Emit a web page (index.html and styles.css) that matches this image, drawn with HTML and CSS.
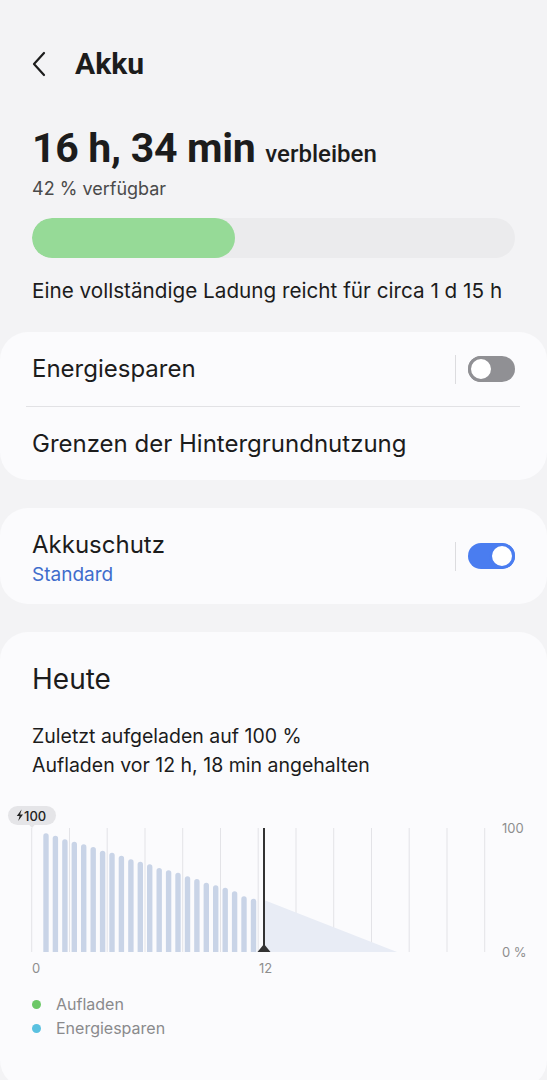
FILE: index.html
```html
<!DOCTYPE html>
<html lang="de">
<head>
    <meta charset="UTF-8">
    <meta name="viewport" content="width=device-width, initial-scale=1.0">
    <title>Akku</title>
    <link rel="stylesheet" href="styles.css">
</head>
<body>
    <header class="topbar">
        <svg class="back" width="16" height="26" viewBox="0 0 16 26">
            <path d="M13 2 L3 13 L13 24" fill="none" stroke="#1c1c1c" stroke-width="2.2" stroke-linecap="round" stroke-linejoin="round"/>
        </svg>
        <h1>Akku</h1>
    </header>

    <section class="summary">
        <p class="remaining">16 h, 34 min <span>verbleiben</span></p>
        <p class="avail">42 % verfügbar</p>
        <div class="level"><div class="level-fill" style="width: 42%"></div></div>
        <p class="full">Eine vollständige Ladung reicht für circa 1 d 15 h</p>
    </section>

    <div class="card">
        <div class="row row-first">
            <span class="label">Energiesparen</span>
            <span class="sep"></span>
            <span class="toggle"></span>
        </div>
        <div class="divider"></div>
        <div class="row row-last">
            <span class="label">Grenzen der Hintergrundnutzung</span>
        </div>
    </div>

    <div class="card">
        <div class="row row-protect">
            <div class="text-block">
                <div class="label">Akkuschutz</div>
                <div class="sub">Standard</div>
            </div>
            <span class="sep"></span>
            <span class="toggle on"></span>
        </div>
    </div>

    <div class="card card-today">
        <h2>Heute</h2>
        <p class="charge-info">Zuletzt aufgeladen auf 100 %<br>Aufladen vor 12 h, 18 min angehalten</p>

        <svg class="chart" width="547" height="180" viewBox="0 0 547 180">
            <!-- grid -->
            <g stroke="#e3e3e7" stroke-width="1">
                <line x1="31.7" y1="28" x2="31.7" y2="152"/>
                <line x1="69.5" y1="28" x2="69.5" y2="152"/>
                <line x1="107.2" y1="28" x2="107.2" y2="152"/>
                <line x1="145" y1="28" x2="145" y2="152"/>
                <line x1="182.7" y1="28" x2="182.7" y2="152"/>
                <line x1="220.5" y1="28" x2="220.5" y2="152"/>
                <line x1="258.2" y1="28" x2="258.2" y2="152"/>
                <line x1="296" y1="28" x2="296" y2="152"/>
                <line x1="333.7" y1="28" x2="333.7" y2="152"/>
                <line x1="371.5" y1="28" x2="371.5" y2="152"/>
                <line x1="409.2" y1="28" x2="409.2" y2="152"/>
                <line x1="447" y1="28" x2="447" y2="152"/>
                <line x1="484.7" y1="28" x2="484.7" y2="152"/>
            </g>

            <!-- forecast -->
            <polygon points="264,100 397,152 264,152" fill="#e8ecf5"/>

            <!-- history bars -->
            <clipPath id="plot"><rect x="0" y="0" width="547" height="152"/></clipPath>
            <g fill="#c9d4e7" clip-path="url(#plot)">
                <rect x="43.3" y="33.3" width="5.4" height="125" rx="2.7"/>
                <rect x="52.7" y="35.7" width="5.4" height="125" rx="2.7"/>
                <rect x="62.2" y="39.3" width="5.4" height="125" rx="2.7"/>
                <rect x="71.6" y="41.7" width="5.4" height="125" rx="2.7"/>
                <rect x="81.0" y="44.3" width="5.4" height="125" rx="2.7"/>
                <rect x="90.5" y="47" width="5.4" height="125" rx="2.7"/>
                <rect x="99.9" y="50.7" width="5.4" height="125" rx="2.7"/>
                <rect x="109.3" y="52.7" width="5.4" height="125" rx="2.7"/>
                <rect x="118.7" y="55.7" width="5.4" height="125" rx="2.7"/>
                <rect x="128.2" y="59.3" width="5.4" height="125" rx="2.7"/>
                <rect x="137.6" y="61.7" width="5.4" height="125" rx="2.7"/>
                <rect x="147.0" y="64.3" width="5.4" height="125" rx="2.7"/>
                <rect x="156.5" y="68" width="5.4" height="125" rx="2.7"/>
                <rect x="165.9" y="70.3" width="5.4" height="125" rx="2.7"/>
                <rect x="175.3" y="72.7" width="5.4" height="125" rx="2.7"/>
                <rect x="184.8" y="76.3" width="5.4" height="125" rx="2.7"/>
                <rect x="194.2" y="79" width="5.4" height="125" rx="2.7"/>
                <rect x="203.6" y="82.7" width="5.4" height="125" rx="2.7"/>
                <rect x="213.0" y="85.3" width="5.4" height="125" rx="2.7"/>
                <rect x="222.5" y="87.7" width="5.4" height="125" rx="2.7"/>
                <rect x="231.9" y="91.3" width="5.4" height="125" rx="2.7"/>
                <rect x="241.3" y="96.3" width="5.4" height="125" rx="2.7"/>
                <rect x="250.8" y="98.7" width="5.4" height="125" rx="2.7"/>
            </g>

            <!-- now marker -->
            <line x1="264" y1="28" x2="264" y2="150" stroke="#333" stroke-width="2"/>
            <polygon points="257.5,152 270.5,152 264,144" fill="#333"/>

            <!-- last full charge badge -->
            <rect x="8" y="6" width="48" height="19" rx="9.5" fill="#e5e5e8"/>
            <polygon points="28.5,24 35.5,24 32,28" fill="#e5e5e8"/>
            <path d="M21.6 9.6 L16.8 16 H19.6 L18.2 21 L23 14.4 H20.1 Z" fill="#222"/>
            <text x="24" y="20.6" class="badge-text">100</text>

            <!-- axis labels -->
            <text x="36" y="173" class="axis" text-anchor="middle">0</text>
            <text x="265.5" y="173" class="axis" text-anchor="middle">12</text>
            <text x="502" y="33" class="axis">100</text>
            <text x="502" y="157" class="axis">0 %</text>
        </svg>

        <ul class="legend">
            <li><span class="dot dot-charge"></span>Aufladen</li>
            <li><span class="dot dot-saver"></span>Energiesparen</li>
        </ul>
    </div>
</body>
</html>
```

FILE: styles.css
```css
body {
    margin: 0;
    background-color: #f3f3f5;
    font-family: Inter, Roboto, sans-serif;
    color: #1c1c1c;
}

p { margin: 0; }

.topbar {
    display: flex;
    align-items: center;
    height: 128px;
    padding-left: 31px;
    padding-bottom: 2px;
    box-sizing: border-box;
}
.topbar .back { margin-right: 28px; margin-top: 1px; }
.topbar h1 {
    margin: 0;
    font-family: Roboto, sans-serif;
    font-size: 30px;
    font-weight: 700;
}

.summary { padding: 0 32px; }
.remaining {
    font-family: Roboto, sans-serif;
    font-size: 41px;
    font-weight: 700;
    line-height: 40px;
    letter-spacing: -0.3px;
}
.remaining span {
    font-size: 24px;
    font-weight: 500;
    letter-spacing: 0;
}
.avail {
    margin-top: 3px;
    font-size: 18px;
    line-height: 24px;
    color: #4a4a4a;
}
.level {
    margin-top: 17px;
    height: 40px;
    border-radius: 20px;
    background-color: #ebebed;
    overflow: hidden;
}
.level-fill {
    height: 100%;
    border-radius: 20px;
    background-color: #96da97;
}
.full {
    margin-top: 20px;
    font-size: 20.7px;
    line-height: 26px;
}

.card {
    margin-top: 28px;
    background-color: #fbfbfd;
    border-radius: 28px;
}
.row {
    display: flex;
    align-items: center;
    padding: 0 32px;
}
.row-first { height: 74px; }
.row-last { height: 73px; }
.row-protect { height: 96px; }
.row > :first-child { flex: 1; }
.label {
    font-size: 24px;
    line-height: 30px;
}
.text-block { padding-top: 4px; }
.sub {
    margin-top: 3px;
    font-size: 19px;
    line-height: 24px;
    color: #3f6dcc;
}
.divider {
    height: 1px;
    margin: 0 27px 0 26px;
    background-color: #e2e2e5;
}
.sep {
    width: 1px;
    height: 29px;
    background-color: #dcdcdf;
    margin-right: 12px;
}
.toggle {
    position: relative;
    width: 47px;
    height: 26px;
    border-radius: 13px;
    background-color: #909094;
}
.toggle::after {
    content: "";
    position: absolute;
    top: 0;
    left: 0;
    width: 26px;
    height: 26px;
    box-sizing: border-box;
    border: 3px solid #909094;
    border-radius: 50%;
    background-color: #fff;
}
.toggle.on { background-color: #4a7df0; }
.toggle.on::after { left: 21px; border-color: #4a7df0; }

.card-today { padding-top: 29px; padding-bottom: 48px; }
.card-today h2 {
    margin: 0;
    padding: 0 32px;
    font-size: 28px;
    font-weight: 400;
    line-height: 36px;
}
.charge-info {
    margin-top: 25px;
    padding: 0 32px;
    font-size: 19.5px;
    line-height: 28.5px;
}
.chart { display: block; margin-top: 21px; }
.chart .axis {
    font-family: Inter, sans-serif;
    font-size: 13px;
    fill: #8e8e8e;
}
.chart .badge-text {
    font-family: Inter, sans-serif;
    font-size: 13px;
    font-weight: 500;
    fill: #222;
}

.legend {
    list-style: none;
    margin: 13px 0 0;
    padding: 0 32px;
    font-size: 16px;
    line-height: 23.5px;
    color: #8a8a8c;
}
.legend li { display: flex; align-items: center; }
.dot {
    width: 9px;
    height: 9px;
    border-radius: 50%;
    margin: 0 15px 0 0;
}
.dot-charge { background-color: #6cc867; }
.dot-saver { background-color: #5ac1e0; }
```
